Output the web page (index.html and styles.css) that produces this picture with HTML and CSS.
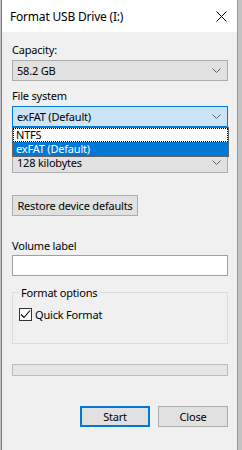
FILE: index.html
```html
<!DOCTYPE html>
<html lang="en">
<head>
  <meta charset="UTF-8">
  <title>Format USB Drive (I:)</title>
  <link rel="stylesheet" href="styles.css">
</head>
<body>

  <div class="window">
    <div class="titlebar">
      <span class="title">Format USB Drive (I:)</span>
      <svg class="close-x" width="11" height="11" viewBox="0 0 11 11">
        <path d="M0.5 0.5 L10.5 10.5 M10.5 0.5 L0.5 10.5" stroke="#000" stroke-width="1" fill="none"/>
      </svg>
    </div>

    <div class="content">
      <div class="label first">Capacity:</div>
      <div class="combo">
        <span>58.2 GB</span>
        <svg class="chev" width="9" height="5" viewBox="0 0 9 5"><path d="M0.5 0.5 L4.5 4.5 L8.5 0.5" stroke="#606060" fill="none"/></svg>
      </div>

      <div class="label">File system</div>
      <div class="combo-wrap">
        <div class="combo focused">
          <span>exFAT (Default)</span>
          <svg class="chev" width="9" height="5" viewBox="0 0 9 5"><path d="M0.5 0.5 L4.5 4.5 L8.5 0.5" stroke="#606060" fill="none"/></svg>
        </div>
        <!-- open dropdown list lies over the allocation size row -->
        <ul class="dropdown">
          <li class="current">NTFS</li>
          <li class="selected">exFAT (Default)</li>
        </ul>
      </div>

      <div class="combo alloc">
        <span>128 kilobytes</span>
        <svg class="chev" width="9" height="5" viewBox="0 0 9 5"><path d="M0.5 0.5 L4.5 4.5 L8.5 0.5" stroke="#606060" fill="none"/></svg>
      </div>

      <button class="btn restore">Restore device defaults</button>

      <div class="label vol">Volume label</div>
      <input type="text" class="textbox">

      <fieldset class="group">
        <legend>Format options</legend>
        <label class="check">
          <span class="box">
            <svg width="11" height="11" viewBox="0 0 11 11"><path d="M1 5.5 L4 8.5 L10 1.5" stroke="#000" stroke-width="1.1" fill="none"/></svg>
          </span>
          Quick Format
        </label>
      </fieldset>

      <div class="progress"></div>

      <div class="actions">
        <button class="btn default">Start</button>
        <button class="btn">Close</button>
      </div>
    </div>
  </div>

</body>
</html>
```

FILE: styles.css
```css
body {
  margin: 0;
  background-color: #c4c4c4;
  font-family: "Noto Sans", Arial, sans-serif;
  font-size: 11px;
  letter-spacing: -0.2px;
  color: #000;
}

.window {
  width: 235px;
  height: 450px;
  margin-left: 1px;
  background: #f0f0f0;
  border-left: 1px solid #7a7a7a;
  border-right: 1px solid #9a9a9a;
}

.titlebar {
  height: 32px;
  background: #fff;
  display: flex;
  align-items: center;
  justify-content: space-between;
  padding: 0 10px 0 8px;
}

.title {
  font-size: 12px;
  line-height: 15px;
}

.content {
  padding: 0 9px 0 10px;
}

.label {
  line-height: 15px;
  height: 15px;
  margin-top: 7px;
}

.label.first {
  margin-top: 10px;
}

.label.vol {
  margin-top: 22px;
}

.combo {
  box-sizing: border-box;
  height: 21px;
  margin-top: 3px;
  background: #e1e1e1;
  border: 1px solid #adadad;
  display: flex;
  align-items: center;
  justify-content: space-between;
  padding: 0 6px 0 4px;
  white-space: nowrap;
}

.combo.focused {
  background: #cce4f7;
  border-color: #0078d7;
}

.combo.alloc {
  margin-top: 25px;
}

.combo-wrap {
  position: relative;
}

.dropdown {
  position: absolute;
  top: 21px;
  left: 0;
  right: -1px;
  margin: 0;
  padding: 0;
  list-style: none;
  background: #fff;
  border: 1px solid #646464;
  z-index: 2;
}

.dropdown li {
  box-sizing: border-box;
  height: 14px;
  line-height: 14px;
  padding: 0 3px;
  white-space: nowrap;
}

.dropdown li.current {
  border: 1px dotted #000;
  padding: 0 2px;
  line-height: 12px;
}

.dropdown li.selected {
  background: #0078d7;
  color: #fff;
}

.btn {
  box-sizing: border-box;
  height: 21px;
  background: #e1e1e1;
  border: 1px solid #adadad;
  font-family: inherit;
  font-size: 11px;
  letter-spacing: -0.2px;
  color: #000;
  padding: 0;
  white-space: nowrap;
}

.restore {
  display: block;
  width: 126px;
  margin-top: 22px;
}

.textbox {
  display: block;
  box-sizing: border-box;
  width: 100%;
  height: 21px;
  margin: 2px 0 0;
  border: 1px solid #a0a0a0;
  background: #fff;
}

.group {
  box-sizing: border-box;
  height: 59px;
  margin: 9px 0 0;
  padding: 7px 6px 0;
  border: 1px solid #dcdcdc;
}

.group legend {
  padding: 0 2px;
  line-height: 15px;
}

.check {
  display: flex;
  align-items: center;
  gap: 3px;
  line-height: 15px;
}

.box {
  box-sizing: border-box;
  width: 13px;
  height: 13px;
  border: 1px solid #333;
  background: #fff;
  display: flex;
  align-items: center;
  justify-content: center;
}

.progress {
  box-sizing: border-box;
  height: 12px;
  margin-top: 20px;
  background: #e6e6e6;
  border: 1px solid #bcbcbc;
}

.actions {
  display: flex;
  justify-content: flex-end;
  gap: 8px;
  margin-top: 30px;
}

.actions .btn {
  width: 70px;
}

.btn.default {
  border: 1px solid #0078d7;
  box-shadow: inset 0 0 0 1px #0078d7;
}
```
